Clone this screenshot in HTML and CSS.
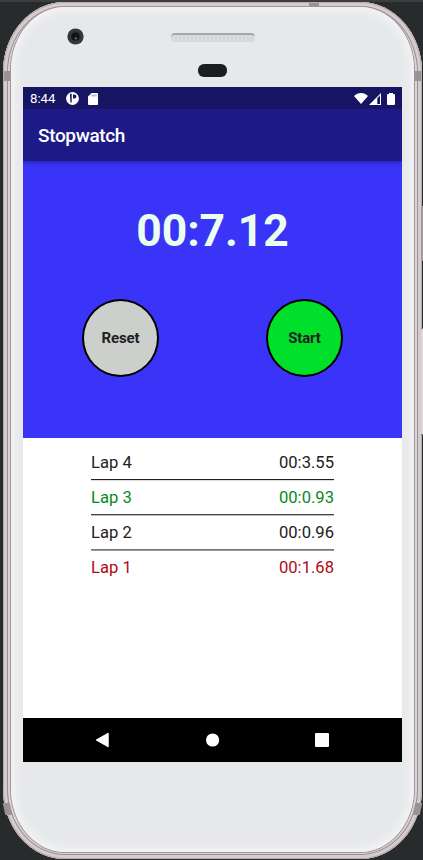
FILE: index.html
```html
<!DOCTYPE html>
<html lang="en">
<head>
<meta charset="utf-8">
<title>Stopwatch</title>
<link rel="stylesheet" href="styles.css">
</head>
<body>
<div class="phone">
  <i class="side-key power"></i>
  <i class="side-key volume"></i>
  <i class="seam seam-tl"></i><i class="seam seam-tr"></i>
  <i class="seam seam-bl"></i><i class="seam seam-br"></i>
  <i class="seam seam-top"></i>
  <div class="face">
    <div class="bezel-top">
      <svg class="camera" viewBox="0 0 18 18"><circle cx="9" cy="9" r="8.6" fill="#303437"/><circle cx="9" cy="9" r="6.8" fill="none" stroke="#50545a" stroke-dasharray="1 2"/><circle cx="9" cy="9" r="4.3" fill="#111416"/><circle cx="9.3" cy="11" r="1.2" fill="#77752e"/></svg>
      <i class="speaker"></i>
      <i class="sensor"></i>
    </div>
    <div class="screen">
      <div class="status">
        <span class="clock">8:44</span>
        <svg class="st-app" viewBox="0 0 13 13"><circle cx="6.5" cy="6.5" r="6.4" fill="#fff"/><path d="M3.9 1.8h1.8v8.6H4.4zM7 2.6h1.4a2 2 0 0 1 0 4H7z" fill="#171464"/></svg>
        <svg class="st-sd" viewBox="0 0 10 12"><path d="M3.6 0H9a1 1 0 0 1 1 1v10a1 1 0 0 1-1 1H1a1 1 0 0 1-1-1V3.6z" fill="#fff"/><path d="M3.7 1.5h1v2h-1zM5.6 1.5h1v2h-1zM7.5 1.5h1v2h-1z" fill="#8582b5"/></svg>
        <svg class="st-wifi" viewBox="0 0 14 11"><path d="M0 3C4-1 10-1 14 3L7 11z" fill="#fff"/></svg>
        <svg class="st-signal" viewBox="0 0 12 12"><path d="M12 0v12H0z" fill="#fff"/><path d="M8.3 5.2 11 2.5V11H8.3z" fill="#171464"/></svg>
        <svg class="st-battery" viewBox="0 0 8 12"><path d="M2 0h4v1h1a1 1 0 0 1 1 1v9a1 1 0 0 1-1 1H1a1 1 0 0 1-1-1V2a1 1 0 0 1 1-1h1z" fill="#fff"/></svg>
      </div>
      <header class="appbar">Stopwatch</header>
      <section class="timer">
        <div class="time">00:7.12</div>
        <div class="controls">
          <button class="round reset">Reset</button>
          <button class="round start">Start</button>
        </div>
      </section>
      <section class="laps">
        <div class="lap"><span>Lap 4</span><span>00:3.55</span></div>
        <div class="lap best"><span>Lap 3</span><span>00:0.93</span></div>
        <div class="lap"><span>Lap 2</span><span>00:0.96</span></div>
        <div class="lap worst"><span>Lap 1</span><span>00:1.68</span></div>
      </section>
      <nav class="nav">
        <svg viewBox="0 0 16 16"><path d="M13.2 1.2v13.6L1.2 8z" fill="#fff" stroke="#fff" stroke-linejoin="round"/></svg>
        <svg viewBox="0 0 16 16"><circle cx="7.6" cy="8" r="6.6" fill="#fff"/></svg>
        <svg viewBox="0 0 16 16"><rect x="1" y="1" width="14" height="14" rx="1" fill="#fff"/></svg>
      </nav>
    </div>
  </div>
</div>
</body>
</html>
```
FILE: styles.css
```css
* { box-sizing: border-box; }
body {
  margin: 0;
  width: 423px;
  height: 860px;
  overflow: hidden;
  background: #282b2c;
  font-family: Roboto, sans-serif;
}
.phone {
  position: relative;
  width: 419px;
  height: 857px;
  margin: 2px 0 0 3px;
  padding: 5px 8px 6px;
  border-radius: 62px / 70px;
  background: #d2c8cb;
  box-shadow: inset 0 0 0 1px #b5abae, inset 0 0 0 4px #d6ccd0, inset 0 0 0 5px #9b9195, inset 0 0 0 7px #dcd3d6;
}
body::before {
  content: "";
  display: block;
  height: 2px;
  margin-bottom: -2px;
  background: #3a3e3e;
}
.face {
  position: relative;
  width: 403px;
  height: 845px;
  padding: 0 12px;
  border-radius: 54px / 63px;
  background: #e7e8ea;
  box-shadow: 0 0 0 1px #a0969a, inset 0 0 9px 4px #f4f4f7;
}
.bezel-top { position: relative; height: 80px; }
.camera { position: absolute; left: 44px; top: 21px; width: 17px; height: 17px; }
.speaker {
  position: absolute;
  left: 148px;
  top: 26px;
  width: 84px;
  height: 9px;
  border-radius: 4px;
  background: repeating-linear-gradient(90deg, #d4d6da 0 2px, #dcdde1 2px 4px);
  border-top: 2px solid #a4a7af;
  border-bottom: 1px solid #d5d8dd;
}
.sensor { position: absolute; left: 175px; top: 57px; width: 29px; height: 13px; border-radius: 6px; background: #1b1d1f; }
.side-key { position: absolute; right: -1px; width: 2px; background: #a0989a; }
.power { top: 204px; height: 55px; }
.volume { top: 326px; height: 107px; background: #dcd8da; border: solid #777; border-width: 1px 0; }
.seam { position: absolute; width: 7px; height: 10px; background: #9b9295; }
.seam-tl { left: 1px; top: 69px; }
.seam-tr { right: 1px; top: 69px; }
.seam-bl { left: 1px; top: 801px; height: 12px; transform: skewX(12deg); }
.seam-br { right: 1px; top: 801px; height: 12px; transform: skewX(-12deg); }
.seam-top { left: 306px; top: 1px; width: 10px; height: 4px; }
.screen {
  display: flex;
  flex-direction: column;
  width: 379px;
  height: 675px;
  overflow: hidden;
  background: #fff;
}
.status {
  display: flex;
  align-items: center;
  height: 22px;
  padding: 1px 7px 0 7px;
  background: #171464;
  color: #fff;
}
.clock { width: 36px; font-size: 13.2px; font-weight: 400; line-height: 20px; }
.st-app { width: 13px; height: 13px; }
.st-sd { width: 10px; height: 12px; margin-left: 9px; }
.st-wifi { width: 14px; height: 11px; margin-left: auto; }
.st-signal { width: 12px; height: 12px; margin-left: 1px; }
.st-battery { width: 8px; height: 12px; margin-left: 6px; }
.appbar {
  position: relative;
  height: 52px;
  padding-left: 15px;
  background: #1d1a87;
  color: #fff;
  font-size: 19px;
  font-weight: 500;
  letter-spacing: -0.35px;
  line-height: 53px;
  box-shadow: 0 1px 5px rgba(0, 0, 0, .4);
  clip-path: inset(0 0 -8px 0);
}
.timer { height: 277px; padding-top: 42px; background: #3a34f8; }
.time {
  height: 56px;
  color: #eaffee;
  font-size: 44.5px;
  font-weight: 700;
  letter-spacing: -0.1px;
  line-height: 56px;
  text-align: center;
}
.controls { display: flex; justify-content: space-between; margin-top: 40px; padding: 0 59px; }
.round {
  width: 77px;
  height: 78px;
  padding: 0;
  border: 2px solid #000;
  border-radius: 50%;
  color: #212121;
  font: 700 15px Roboto, sans-serif;
  letter-spacing: -0.15px;
}
.reset { background: #cdcfcd; }
.start { background: #00e02b; }
.laps { flex: 1; padding: 7px 68px 0; }
.lap {
  display: flex;
  justify-content: space-between;
  height: 35px;
  border-bottom: 1px solid #222;
  color: #212121;
  font-size: 16.6px;
  line-height: 36px;
}
.lap:nth-child(-n+3) { box-shadow: 0 1px 0 #ddd; }
.lap:nth-child(2) { border-color: #444; box-shadow: 0 1px 0 #bbb; }
.lap:nth-child(3) { border-color: #777; box-shadow: 0 1px 0 #999; }
.lap:last-child { border: 0; }
.best { color: #078a1c; }
.worst { color: #b00914; }
.nav {
  display: flex;
  justify-content: space-between;
  align-items: center;
  height: 44px;
  padding: 0 72px;
  background: #000;
}
.nav svg { width: 16px; height: 16px; }
```
